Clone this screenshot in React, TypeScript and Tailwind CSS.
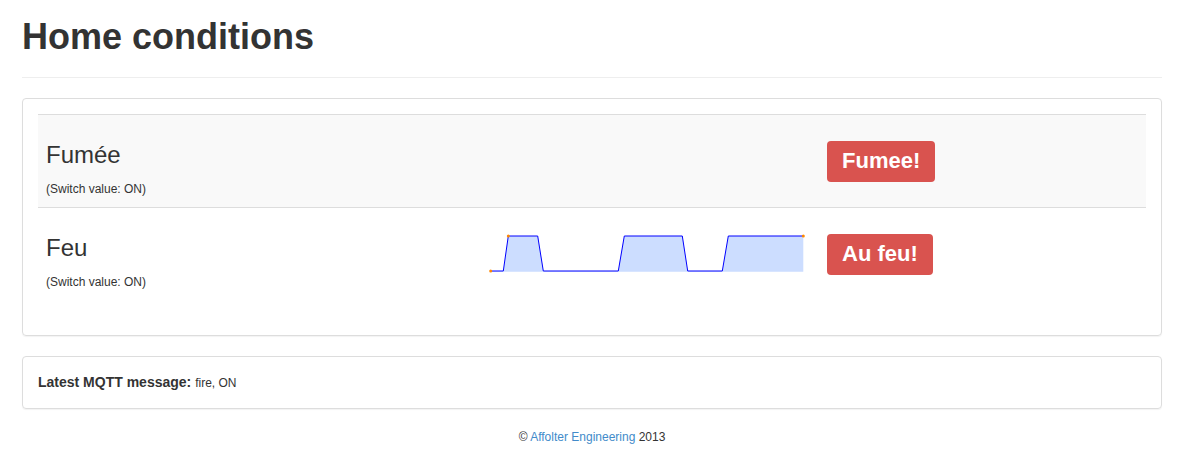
import React from 'react';

type Sensor = {
  name: string;
  value: string;
  alert: string;
  chart?: boolean;
};

const sensors: Sensor[] = [
  { name: 'Fumée', value: 'ON', alert: 'Fumee!' },
  { name: 'Feu', value: 'ON', alert: 'Au feu!', chart: true },
];

// sparkline (valeurs on/off)
const linePts: [number, number][] = [
  [2.7, 38],
  [15.3, 38],
  [20.3, 3],
  [49.7, 3],
  [55.3, 38],
  [130.3, 38],
  [136.3, 3],
  [194.3, 3],
  [199.7, 38],
  [234.3, 38],
  [240.3, 3],
  [315.3, 3],
];

function Sparkline() {
  const line = linePts.map(([x, y], i) => `${i ? 'L' : 'M'}${x} ${y}`).join(' ');
  const fill = `${line} L315.3 38.7 L2.7 38.7 Z`;
  return (
    <svg width="320" height="42" viewBox="0 0 320 42" className="block">
      <path d={fill} fill="#ccddff" />
      <path d={line} fill="none" stroke="#0000ff" strokeWidth="1" />
      <circle cx="2.7" cy="38" r="1.5" fill="#ff8800" />
      <circle cx="20.3" cy="3" r="1.5" fill="#ff8800" />
      <circle cx="315.3" cy="3" r="1.5" fill="#ff8800" />
    </svg>
  );
}

function SensorRow({ sensor, striped }: { sensor: Sensor; striped: boolean }) {
  return (
    <div
      className={`grid grid-cols-[442px_339px_1fr] border-t border-[#dddddd] ${
        striped ? 'bg-[#f9f9f9]' : ''
      }`}
    >
      <div className="px-2 pt-[27px] pb-[9px]">
        <h3 className="text-[24px] leading-[26px] font-normal mb-[13px]">{sensor.name}</h3>
        <p className="text-[12px] leading-[17px]">(Switch value: {sensor.value})</p>
      </div>
      <div className="px-2 flex items-center">{sensor.chart && <Sparkline />}</div>
      <div className="px-2 flex items-center">
        <span className="inline-flex items-center h-[41px] px-[15px] rounded-[4px] bg-[#d9534f] text-white font-bold text-[22px] leading-none">
          {sensor.alert}
        </span>
      </div>
    </div>
  );
}

export default function App() {
  return (
    <div className="min-h-screen bg-white text-[#333333] font-['Liberation_Sans',Arial,sans-serif] text-[14px] leading-[20px]">
      <div className="ml-[22px] w-[1140px]">
        <div className="pt-[17px] pb-[20px] border-b border-[#eeeeee] mb-[20px]">
          <h1 className="text-[36px] leading-[40px] font-bold">Home conditions</h1>
        </div>

        <div className="border border-[#dddddd] rounded-[4px] shadow-[0_1px_1px_rgba(0,0,0,0.05)] p-[15px] mb-[20px]">
          <div className="mb-[20px]">
            {sensors.map((s, i) => (
              <SensorRow key={s.name} sensor={s} striped={i % 2 === 0} />
            ))}
          </div>
        </div>

        <div className="border border-[#dddddd] rounded-[4px] shadow-[0_1px_1px_rgba(0,0,0,0.05)] p-[15px] mb-[20px]">
          <strong className="font-bold">Latest MQTT message:</strong>{' '}
          <span className="text-[12px]">fire, ON</span>
        </div>

        <footer className="text-center text-[12px] leading-[17px]">
          © <a href="#" className="text-[#428bca]">Affolter Engineering</a> 2013
        </footer>
      </div>
    </div>
  );
}
